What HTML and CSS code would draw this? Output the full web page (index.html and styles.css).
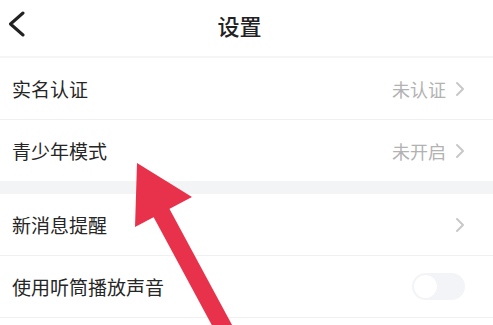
FILE: index.html
```html
<!DOCTYPE html>
<html lang="zh">
<head>
<meta charset="utf-8">
<link rel="stylesheet" href="styles.css">
</head>
<body>
<div class="page">
  <header class="nav">
    <svg class="back" width="20" height="26" viewBox="0 0 20 26"><path d="M15 2 L2.5 13 L15 24" fill="none" stroke="#222" stroke-width="3" stroke-linecap="round" stroke-linejoin="round"/></svg>
    <div class="title">设置</div>
  </header>
  <div class="row line">
    <span class="label">实名认证</span>
    <span class="right"><span class="val">未认证</span><svg class="chev" width="10" height="16" viewBox="0 0 10 16"><path d="M2 2 L8 8 L2 14" fill="none" stroke="#c8c8c8" stroke-width="2" stroke-linecap="round" stroke-linejoin="round"/></svg></span>
  </div>
  <div class="row">
    <span class="label">青少年模式</span>
    <span class="right"><span class="val">未开启</span><svg class="chev" width="10" height="16" viewBox="0 0 10 16"><path d="M2 2 L8 8 L2 14" fill="none" stroke="#c8c8c8" stroke-width="2" stroke-linecap="round" stroke-linejoin="round"/></svg></span>
  </div>
  <div class="band"></div>
  <div class="row line">
    <span class="label">新消息提醒</span>
    <span class="right"><svg class="chev" width="10" height="16" viewBox="0 0 10 16"><path d="M2 2 L8 8 L2 14" fill="none" stroke="#c8c8c8" stroke-width="2" stroke-linecap="round" stroke-linejoin="round"/></svg></span>
  </div>
  <div class="row line">
    <span class="label">使用听筒播放声音</span>
    <span class="right"><span class="toggle"><span class="knob"></span></span></span>
  </div>
  <svg class="arrow" width="493" height="325" viewBox="0 0 493 325">
    <polygon points="137,163 192,197 135,227" fill="#e8324b"/>
    <polygon points="153,216 169,208 238,336 222,344" fill="#e8324b"/>
  </svg>
</div>
</body>
</html>
```

FILE: styles.css
```css
html, body {
  margin: 0;
  padding: 0;
  background: #ffffff;
}
.page {
  position: relative;
  width: 493px;
  height: 325px;
  overflow: hidden;
  font-family: "Noto Sans CJK SC", "Noto Sans", sans-serif;
  color: #222222;
}
.nav {
  height: 56px;
  border-bottom: 2px solid #f5f5f6;
  display: flex;
  align-items: center;
  justify-content: center;
  position: relative;
}
.back {
  position: absolute;
  left: 8px;
  top: 11px;
}
.title {
  font-size: 22px;
  font-weight: 500;
  line-height: 1;
  margin-top: -6px;
  margin-right: 14px;
  color: #222222;
}
.row {
  height: 61px;
  display: flex;
  align-items: center;
  justify-content: space-between;
  padding: 0 28px 0 12px;
}
.row.line {
  border-bottom: 1px solid #f0f0f0;
}
.label {
  font-size: 19px;
  color: #262626;
  line-height: 1;
}
.right {
  display: flex;
  align-items: center;
  gap: 9px;
}
.val {
  font-size: 18px;
  color: #b2b2b2;
  line-height: 1;
}
.chev {
  display: block;
}
.band {
  height: 13px;
  background: #f3f4f6;
}
.toggle {
  width: 53px;
  height: 27px;
  border-radius: 14px;
  background: #f2f4f7;
  position: relative;
  display: block;
}
.knob {
  position: absolute;
  left: 2px;
  top: 2px;
  width: 23px;
  height: 23px;
  border-radius: 50%;
  background: #ffffff;
  box-shadow: 0 0 1px rgba(0,0,0,0.04);
}
.arrow {
  position: absolute;
  left: 0;
  top: 0;
  pointer-events: none;
}
```
